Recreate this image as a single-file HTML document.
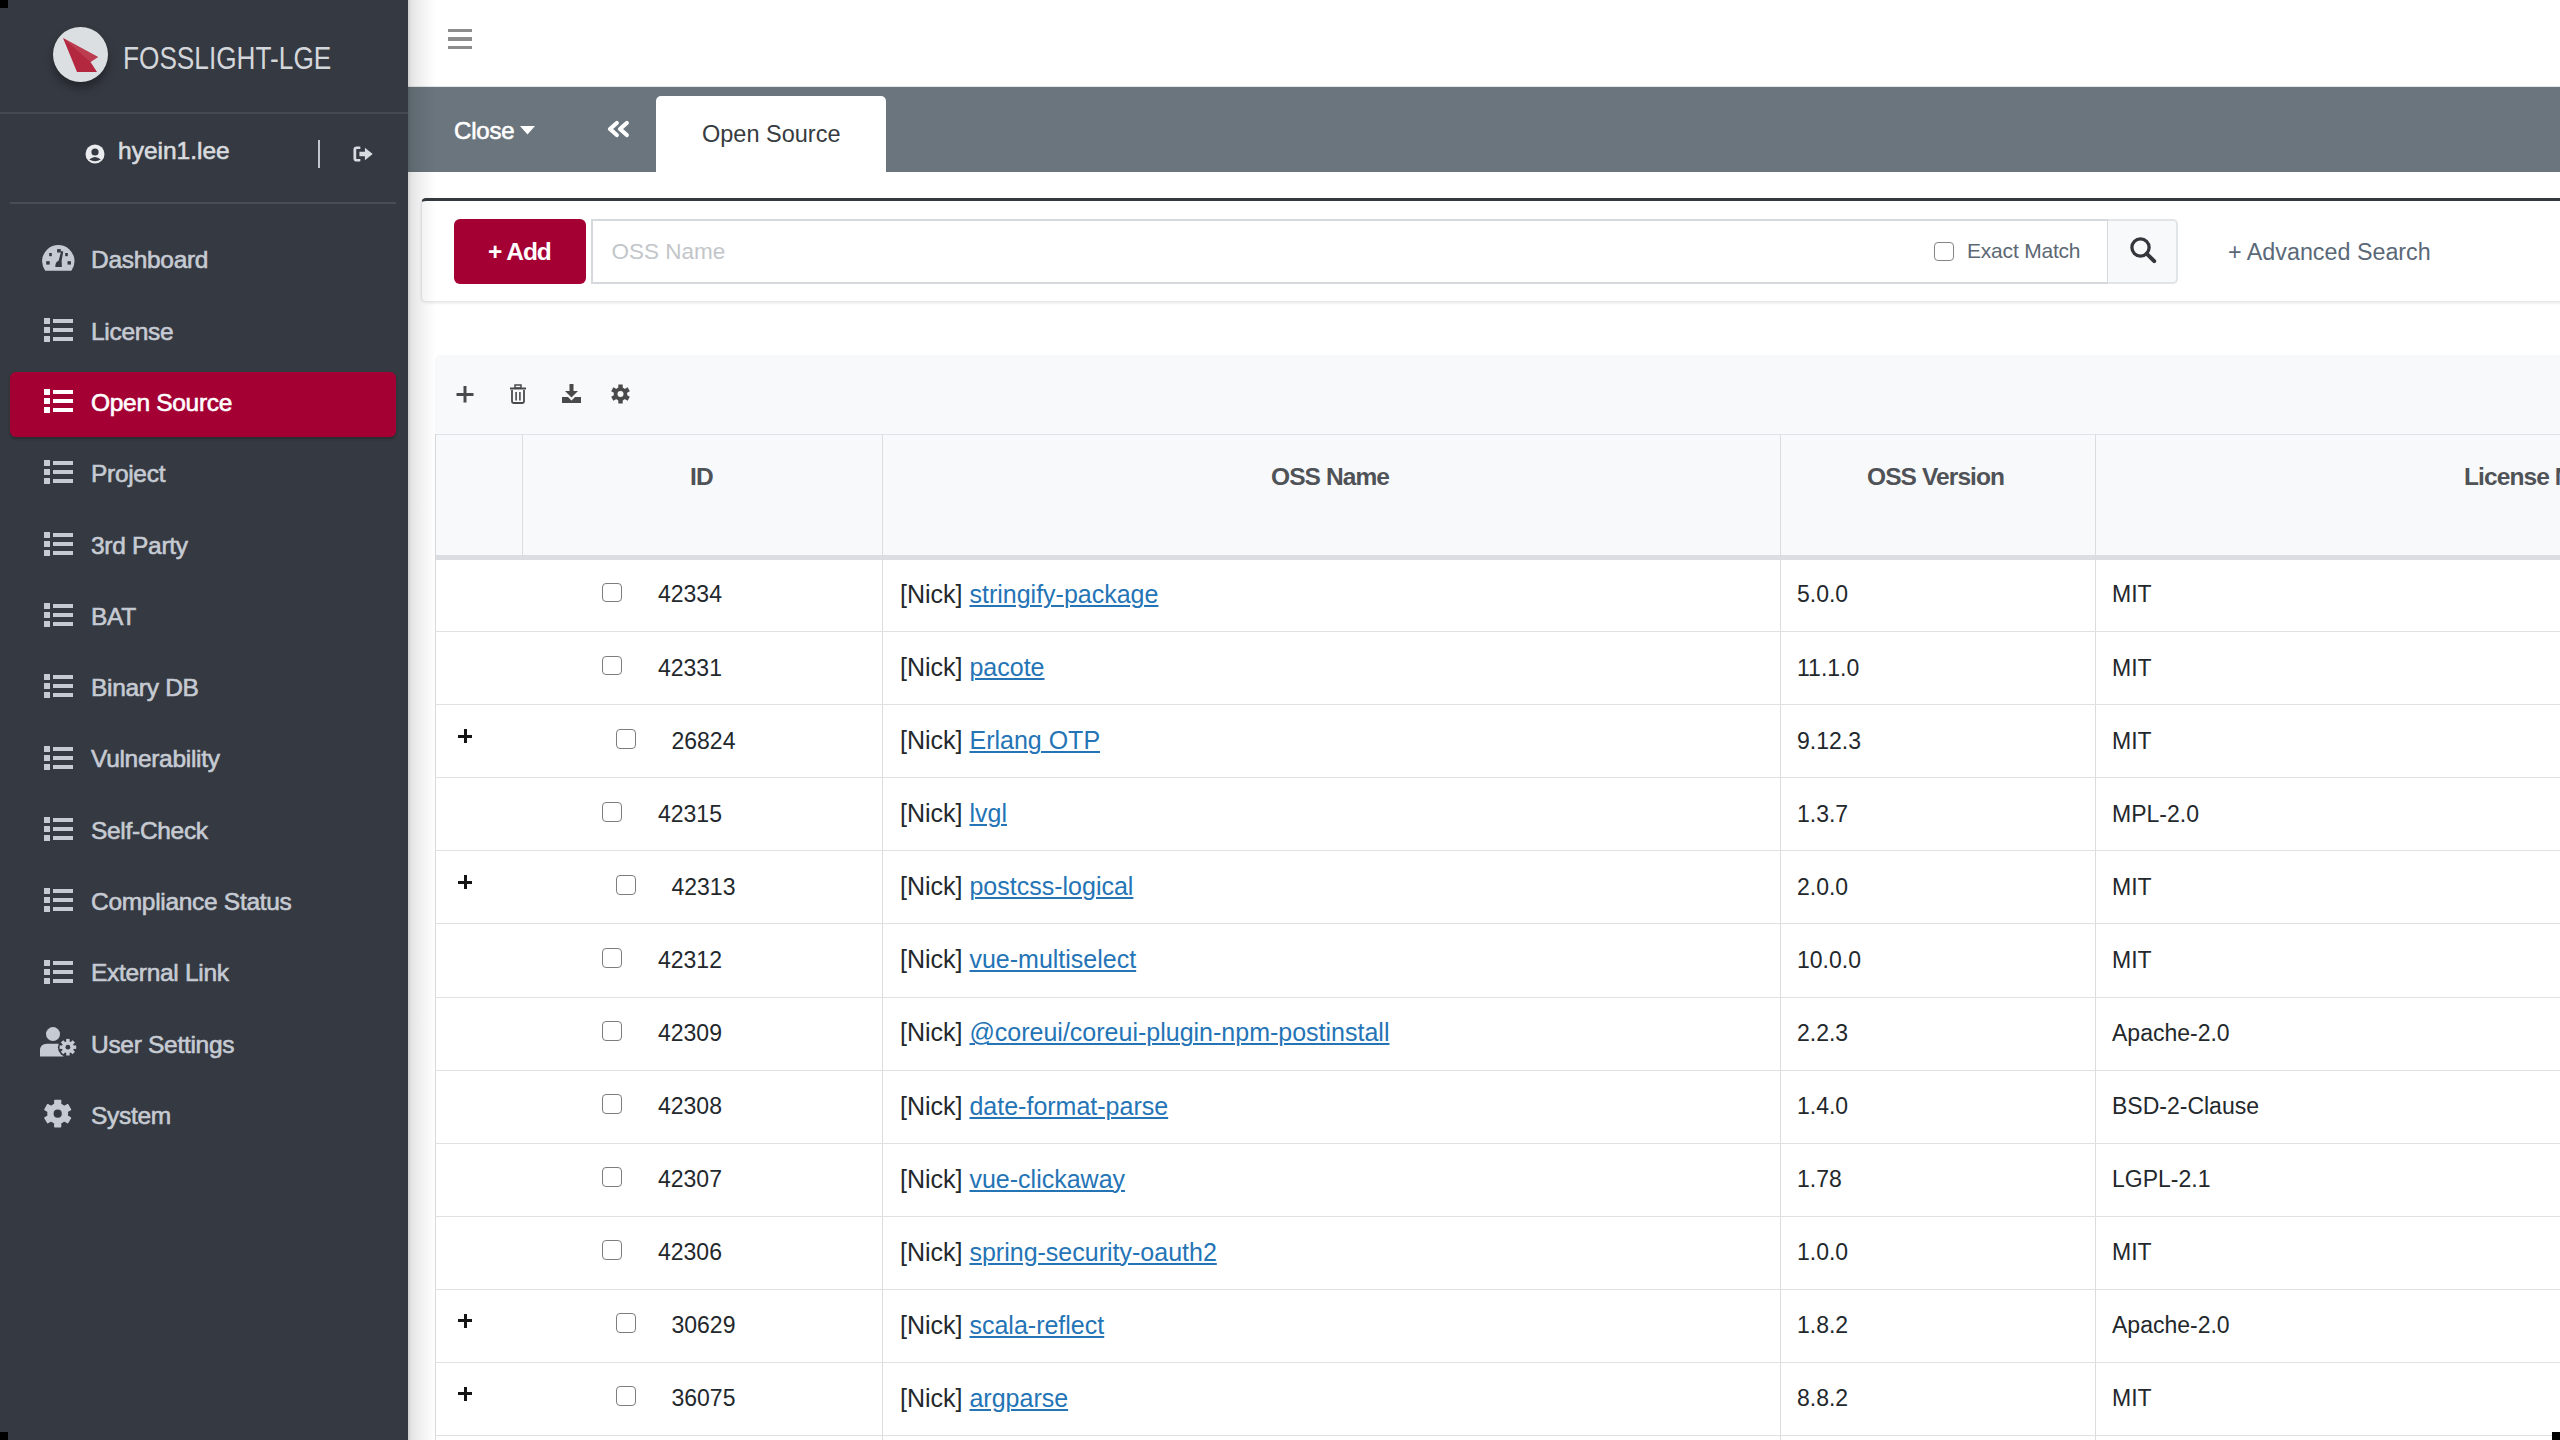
<!DOCTYPE html>
<html><head><meta charset="utf-8"><style>
*{margin:0;padding:0;box-sizing:border-box}
html,body{width:2560px;height:1440px;overflow:hidden;background:#fff;font-family:"Liberation Sans",sans-serif}
.abs{position:absolute}
.t{position:absolute;white-space:nowrap;line-height:1}
#sb{position:absolute;left:0;top:0;width:408px;height:1440px;background:#353941}
#sbshadow{position:absolute;left:408px;top:0;width:27px;height:1440px;z-index:5;background:linear-gradient(to right,rgba(0,0,0,0.19) 0,rgba(0,0,0,0.11) 12%,rgba(0,0,0,0.07) 35%,rgba(0,0,0,0.035) 65%,rgba(0,0,0,0.01) 92%,rgba(0,0,0,0) 100%)}
#brand{left:122.5px;top:41.8px;font-size:32px;color:#d3d6da;transform:scaleX(0.819);transform-origin:0 0}
#uname{left:118px;top:138.5px;font-size:24.5px;font-weight:400;-webkit-text-stroke:0.6px currentColor;color:#d8dbdf}
.mtx{left:91px;font-size:24.5px;font-weight:400;-webkit-text-stroke:0.6px currentColor;letter-spacing:-0.3px}
#active{position:absolute;left:10px;top:372px;width:386px;height:65px;background:#a50034;border-radius:6px;box-shadow:0 2px 3px rgba(0,0,0,0.25)}
#hdr{position:absolute;left:408px;top:0;width:2152px;height:87px;background:#fff;border-bottom:1px solid #e4e7ea}
#tabbar{position:absolute;left:408px;top:87px;width:2152px;height:85px;background:#6a757d}
#close{left:454px;top:119px;font-size:24px;font-weight:400;-webkit-text-stroke:0.6px currentColor;color:#fff;letter-spacing:-0.2px}
#tab{position:absolute;left:656px;top:96px;width:230px;height:76px;background:#fff;border-radius:5px 5px 0 0}
#tabtx{left:702px;top:123px;font-size:23.5px;color:#363b40}
#card{position:absolute;left:421px;top:198px;width:2160px;height:104px;background:#fff;border:1px solid #e6e8eb;border-top:3.7px solid #343a40;border-radius:5px;box-shadow:0 1px 3px rgba(0,0,0,0.10)}
#addbtn{position:absolute;left:454px;top:219px;width:132px;height:65px;background:#a50034;border-radius:6px}
#addtx{left:488px;top:239.5px;font-size:24.5px;font-weight:700;color:#fff;letter-spacing:-1px}
#inp{position:absolute;left:591px;top:219px;width:1518px;height:65px;border:2px solid #d5d9dd;background:#fff}
#ph{left:611.5px;top:241px;font-size:22.5px;color:#c2c6ca}
#exact{left:1967px;top:240px;font-size:21px;color:#5c6873;letter-spacing:-0.2px}
#sbtn{position:absolute;left:2108px;top:219px;width:70px;height:65px;border:2px solid #e2e5e8;border-left:none;background:#f8f9fa;border-radius:0 5px 5px 0}
#adv{left:2228px;top:240.5px;font-size:23.3px;color:#5a6878}
.cb{position:absolute;width:20px;height:19.5px;border:1.5px solid #7d7d7d;border-radius:4px;background:#fff}
#panel{position:absolute;left:435px;top:355px;width:2140px;height:80px;background:#f8f9fa;border-radius:5px 0 0 0}
#thead{position:absolute;left:435px;top:434px;width:2140px;height:126px;background:#f8f9fa;border-top:1px solid #dfe2e6;border-bottom:5px solid #dadde1}
.vl{position:absolute;width:1px;background:#dadcde}
.hl{position:absolute;height:1px;background:#dfe1e3;left:435px;width:2125px}
.th{top:464.8px;font-size:24.5px;font-weight:700;color:#4f5256;letter-spacing:-0.9px}
.td{font-size:23px;color:#23282c}
.nm{left:900px;font-size:25px;color:#23282c}
.nm a{color:#2474b6;text-decoration:underline;text-underline-offset:2px;text-decoration-thickness:2px}
.plus{position:absolute;left:458px;width:14px;height:14px}
.plus:before{content:"";position:absolute;left:0;top:5.5px;width:14px;height:3px;background:#151515}
.plus:after{content:"";position:absolute;left:5.5px;top:0;width:3px;height:14px;background:#151515}
.corner{position:absolute;width:8px;height:8px;background:#000}

</style></head><body>
<div id="sb"></div>
<div class="abs" style="left:53px;top:27px;width:55px;height:55px;border-radius:50%;background:#dcdfe2;box-shadow:0 6px 8px rgba(0,0,0,0.35)"></div>
<svg class="abs" style="left:0;top:0" width="120" height="100"><polygon points="63,38 98,57 90.5,62 97,72 77,72" fill="#b3283f"/><polygon points="63,38 98,57 90.5,62" fill="#c24a5c" opacity="0.6"/></svg>
<div class="t" id="brand">FOSSLIGHT-LGE</div>
<div class="abs" style="left:0;top:112px;width:408px;height:2px;background:#454a52"></div>
<svg class="abs" style="left:85px;top:144px" width="20" height="20" viewBox="0 0 20 20"><circle cx="10" cy="10" r="9.5" fill="#e9ebee"/><circle cx="10" cy="8" r="3.6" fill="#353941"/><path d="M4.2 15.5 Q10 10.5 15.8 15.5 Q10 19 4.2 15.5Z" fill="#353941"/></svg>
<div class="t" id="uname">hyein1.lee</div>
<div class="abs" style="left:318px;top:140px;width:2px;height:28px;background:#c3c7cd"></div>
<svg class="abs" style="left:352.5px;top:145.5px" width="22" height="16" viewBox="0 0 24 18" preserveAspectRatio="none"><path d="M8 2 H4 Q2 2 2 4 V14 Q2 16 4 16 H8" stroke="#d8dbdf" stroke-width="3" fill="none"/><path d="M7 6.5 H13 V2 L21.5 9 L13 16 V11.5 H7Z" fill="#d8dbdf"/></svg>
<div class="abs" style="left:10px;top:201.5px;width:386px;height:2px;background:#494e56"></div>
<div id="active"></div>
<div class="abs" style="left:36px;top:238.0px;line-height:0"><svg width="44" height="38" viewBox="0 0 44 38"><path d="M9.18 32.7 A16.2 16.2 0 1 1 35.42 32.7 Z" fill="#c6cbd3"/><rect x="10.2" y="23.2" width="3.5" height="3.4" fill="#353941"/><rect x="31.5" y="23.2" width="3.5" height="3.4" fill="#353941"/><rect x="13.2" y="15" width="2.6" height="3.2" fill="#353941"/><rect x="29.2" y="15" width="2.6" height="3.2" fill="#353941"/><rect x="21.1" y="11.1" width="3.7" height="3.4" fill="#353941"/><path d="M19.3 29 Q19.3 23.8 22.6 22.8 L25.2 13 L27.2 13.4 L25.6 23.2 Q25.9 24.5 25.8 29 Z" fill="#353941"/></svg></div>
<div class="t mtx" style="top:248.3px;color:#c6cbd3">Dashboard</div>
<div class="abs" style="left:43px;top:316.8px;line-height:0"><svg width="31" height="26" viewBox="0 0 31 26"><rect x="1" y="1" width="6" height="6" fill="#c6cbd3"/><rect x="1" y="10" width="6" height="6" fill="#c6cbd3"/><rect x="1" y="19" width="6" height="6" fill="#c6cbd3"/><rect x="10" y="2" width="20" height="4" fill="#c6cbd3"/><rect x="10" y="11" width="20" height="4" fill="#c6cbd3"/><rect x="10" y="20" width="20" height="4" fill="#c6cbd3"/></svg></div>
<div class="t mtx" style="top:319.6px;color:#c6cbd3">License</div>
<div class="abs" style="left:43px;top:388.1px;line-height:0"><svg width="31" height="26" viewBox="0 0 31 26"><rect x="1" y="1" width="6" height="6" fill="#ffffff"/><rect x="1" y="10" width="6" height="6" fill="#ffffff"/><rect x="1" y="19" width="6" height="6" fill="#ffffff"/><rect x="10" y="2" width="20" height="4" fill="#ffffff"/><rect x="10" y="11" width="20" height="4" fill="#ffffff"/><rect x="10" y="20" width="20" height="4" fill="#ffffff"/></svg></div>
<div class="t mtx" style="top:390.9px;color:#ffffff">Open Source</div>
<div class="abs" style="left:43px;top:459.4px;line-height:0"><svg width="31" height="26" viewBox="0 0 31 26"><rect x="1" y="1" width="6" height="6" fill="#c6cbd3"/><rect x="1" y="10" width="6" height="6" fill="#c6cbd3"/><rect x="1" y="19" width="6" height="6" fill="#c6cbd3"/><rect x="10" y="2" width="20" height="4" fill="#c6cbd3"/><rect x="10" y="11" width="20" height="4" fill="#c6cbd3"/><rect x="10" y="20" width="20" height="4" fill="#c6cbd3"/></svg></div>
<div class="t mtx" style="top:462.2px;color:#c6cbd3">Project</div>
<div class="abs" style="left:43px;top:530.7px;line-height:0"><svg width="31" height="26" viewBox="0 0 31 26"><rect x="1" y="1" width="6" height="6" fill="#c6cbd3"/><rect x="1" y="10" width="6" height="6" fill="#c6cbd3"/><rect x="1" y="19" width="6" height="6" fill="#c6cbd3"/><rect x="10" y="2" width="20" height="4" fill="#c6cbd3"/><rect x="10" y="11" width="20" height="4" fill="#c6cbd3"/><rect x="10" y="20" width="20" height="4" fill="#c6cbd3"/></svg></div>
<div class="t mtx" style="top:533.5px;color:#c6cbd3">3rd Party</div>
<div class="abs" style="left:43px;top:602.0px;line-height:0"><svg width="31" height="26" viewBox="0 0 31 26"><rect x="1" y="1" width="6" height="6" fill="#c6cbd3"/><rect x="1" y="10" width="6" height="6" fill="#c6cbd3"/><rect x="1" y="19" width="6" height="6" fill="#c6cbd3"/><rect x="10" y="2" width="20" height="4" fill="#c6cbd3"/><rect x="10" y="11" width="20" height="4" fill="#c6cbd3"/><rect x="10" y="20" width="20" height="4" fill="#c6cbd3"/></svg></div>
<div class="t mtx" style="top:604.8px;color:#c6cbd3">BAT</div>
<div class="abs" style="left:43px;top:673.3px;line-height:0"><svg width="31" height="26" viewBox="0 0 31 26"><rect x="1" y="1" width="6" height="6" fill="#c6cbd3"/><rect x="1" y="10" width="6" height="6" fill="#c6cbd3"/><rect x="1" y="19" width="6" height="6" fill="#c6cbd3"/><rect x="10" y="2" width="20" height="4" fill="#c6cbd3"/><rect x="10" y="11" width="20" height="4" fill="#c6cbd3"/><rect x="10" y="20" width="20" height="4" fill="#c6cbd3"/></svg></div>
<div class="t mtx" style="top:676.1px;color:#c6cbd3">Binary DB</div>
<div class="abs" style="left:43px;top:744.6px;line-height:0"><svg width="31" height="26" viewBox="0 0 31 26"><rect x="1" y="1" width="6" height="6" fill="#c6cbd3"/><rect x="1" y="10" width="6" height="6" fill="#c6cbd3"/><rect x="1" y="19" width="6" height="6" fill="#c6cbd3"/><rect x="10" y="2" width="20" height="4" fill="#c6cbd3"/><rect x="10" y="11" width="20" height="4" fill="#c6cbd3"/><rect x="10" y="20" width="20" height="4" fill="#c6cbd3"/></svg></div>
<div class="t mtx" style="top:747.4px;color:#c6cbd3">Vulnerability</div>
<div class="abs" style="left:43px;top:815.9px;line-height:0"><svg width="31" height="26" viewBox="0 0 31 26"><rect x="1" y="1" width="6" height="6" fill="#c6cbd3"/><rect x="1" y="10" width="6" height="6" fill="#c6cbd3"/><rect x="1" y="19" width="6" height="6" fill="#c6cbd3"/><rect x="10" y="2" width="20" height="4" fill="#c6cbd3"/><rect x="10" y="11" width="20" height="4" fill="#c6cbd3"/><rect x="10" y="20" width="20" height="4" fill="#c6cbd3"/></svg></div>
<div class="t mtx" style="top:818.7px;color:#c6cbd3">Self-Check</div>
<div class="abs" style="left:43px;top:887.2px;line-height:0"><svg width="31" height="26" viewBox="0 0 31 26"><rect x="1" y="1" width="6" height="6" fill="#c6cbd3"/><rect x="1" y="10" width="6" height="6" fill="#c6cbd3"/><rect x="1" y="19" width="6" height="6" fill="#c6cbd3"/><rect x="10" y="2" width="20" height="4" fill="#c6cbd3"/><rect x="10" y="11" width="20" height="4" fill="#c6cbd3"/><rect x="10" y="20" width="20" height="4" fill="#c6cbd3"/></svg></div>
<div class="t mtx" style="top:890.0px;color:#c6cbd3">Compliance Status</div>
<div class="abs" style="left:43px;top:958.5px;line-height:0"><svg width="31" height="26" viewBox="0 0 31 26"><rect x="1" y="1" width="6" height="6" fill="#c6cbd3"/><rect x="1" y="10" width="6" height="6" fill="#c6cbd3"/><rect x="1" y="19" width="6" height="6" fill="#c6cbd3"/><rect x="10" y="2" width="20" height="4" fill="#c6cbd3"/><rect x="10" y="11" width="20" height="4" fill="#c6cbd3"/><rect x="10" y="20" width="20" height="4" fill="#c6cbd3"/></svg></div>
<div class="t mtx" style="top:961.3px;color:#c6cbd3">External Link</div>
<div class="abs" style="left:35px;top:1024.3px;line-height:0"><svg width="45" height="40" viewBox="0 0 45 40"><circle cx="18" cy="10.1" r="7" fill="#c6cbd3"/><path d="M5 32.4 V26.5 Q5 19.7 12 19.7 H24 Q27 19.7 28.5 21.5 V32.4Z" fill="#c6cbd3"/><circle cx="32.9" cy="23.2" r="10" fill="#353941"/><g transform="translate(32.9 23.2)"><circle r="6" fill="#c6cbd3"/><rect x="-1.7" y="-8.3" width="3.4" height="16.6" fill="#c6cbd3" transform="rotate(0)"/><rect x="-1.7" y="-8.3" width="3.4" height="16.6" fill="#c6cbd3" transform="rotate(45)"/><rect x="-1.7" y="-8.3" width="3.4" height="16.6" fill="#c6cbd3" transform="rotate(90)"/><rect x="-1.7" y="-8.3" width="3.4" height="16.6" fill="#c6cbd3" transform="rotate(135)"/><circle r="2.4" fill="#353941"/></g></svg></div>
<div class="t mtx" style="top:1032.6px;color:#c6cbd3">User Settings</div>
<div class="abs" style="left:35px;top:1095.6px;line-height:0"><svg width="45" height="40" viewBox="0 0 45 40"><g transform="translate(22.7 17.7)"><circle r="10.5" fill="#c6cbd3"/><rect x="-3.6" y="-13.9" width="7.2" height="27.8" rx="0.8" fill="#c6cbd3" transform="rotate(0)"/><rect x="-3.6" y="-13.9" width="7.2" height="27.8" rx="0.8" fill="#c6cbd3" transform="rotate(60)"/><rect x="-3.6" y="-13.9" width="7.2" height="27.8" rx="0.8" fill="#c6cbd3" transform="rotate(120)"/><circle r="4.1" fill="#353941"/></g></svg></div>
<div class="t mtx" style="top:1103.9px;color:#c6cbd3">System</div>
<div id="hdr"></div>
<div id="sbshadow"></div>
<div class="abs" style="left:448px;top:28.5px;width:23.5px;height:3.6px;background:#8c8c8c"></div>
<div class="abs" style="left:448px;top:37px;width:23.5px;height:3.6px;background:#8c8c8c"></div>
<div class="abs" style="left:448px;top:45.7px;width:23.5px;height:3.6px;background:#8c8c8c"></div>
<div id="tabbar"></div>
<div class="t" id="close">Close</div>
<svg class="abs" style="left:520px;top:126px" width="15" height="9"><path d="M0 0 H15 L7.5 8.5Z" fill="#fff"/></svg>
<svg class="abs" style="left:604px;top:118px" width="30" height="22" viewBox="0 0 30 22"><path d="M12.8 5 L6 11 L12.8 17 M22.8 5 L16 11 L22.8 17" stroke="#fff" stroke-width="4.2" fill="none" stroke-linejoin="round" stroke-linecap="round"/></svg>
<div id="tab"></div>
<div class="t" id="tabtx">Open Source</div>
<div id="card"></div>
<div id="addbtn"></div>
<div class="t" id="addtx">+ Add</div>
<div id="inp"></div>
<div class="t" id="ph">OSS Name</div>
<div class="cb" style="left:1934px;top:242px;width:19.5px;height:18.5px;border-color:#858585"></div>
<div class="t" id="exact">Exact Match</div>
<div id="sbtn"></div>
<svg class="abs" style="left:2129px;top:236px" width="28" height="28" viewBox="0 0 28 28"><circle cx="11.5" cy="11.5" r="8.6" stroke="#33373c" stroke-width="3.3" fill="none"/><path d="M17.6 17.6 L25.2 25.2" stroke="#33373c" stroke-width="4" stroke-linecap="round"/></svg>
<div class="t" id="adv">+ Advanced Search</div>
<div id="panel"></div>
<svg class="abs" style="left:456px;top:385px" width="18" height="18"><rect x="7.5" y="1" width="3" height="16.5" fill="#4a4a4a"/><rect x="0.5" y="8" width="17" height="3" fill="#4a4a4a"/></svg>
<svg class="abs" style="left:509px;top:384px" width="18" height="20" viewBox="0 0 18 20"><rect x="1" y="3.5" width="16" height="2" fill="#4a4a4a"/><rect x="6" y="1" width="6" height="3" fill="none" stroke="#4a4a4a" stroke-width="1.5"/><path d="M3 6 V17.5 Q3 19 4.5 19 H13.5 Q15 19 15 17.5 V6" stroke="#4a4a4a" stroke-width="1.8" fill="none"/><rect x="6.3" y="8" width="1.6" height="8.5" fill="#4a4a4a"/><rect x="10.1" y="8" width="1.6" height="8.5" fill="#4a4a4a"/></svg>
<svg class="abs" style="left:561px;top:384px" width="21" height="20" viewBox="0 0 21 20"><rect x="8.5" y="0" width="4" height="8" fill="#4a4a4a"/><path d="M4 7 H17 L10.5 13.5Z" fill="#4a4a4a"/><path d="M1 13 H7 L10.5 16.5 L14 13 H20 V19 H1Z" fill="#4a4a4a"/></svg>
<svg class="abs" style="left:611px;top:384px" width="19" height="20" viewBox="0 0 19 20"><g transform="translate(9.5 10)"><circle r="6.8" fill="#4a4a4a"/><rect x="-2.2" y="-9.5" width="4.4" height="19" fill="#4a4a4a" transform="rotate(0)"/><rect x="-2.2" y="-9.5" width="4.4" height="19" fill="#4a4a4a" transform="rotate(60)"/><rect x="-2.2" y="-9.5" width="4.4" height="19" fill="#4a4a4a" transform="rotate(120)"/><circle r="3" fill="#f8f9fa"/></g></svg>
<div id="thead"></div>
<div class="vl" style="left:522px;top:435px;height:121px"></div>
<div class="vl" style="left:882px;top:435px;height:1005px"></div>
<div class="vl" style="left:1780px;top:435px;height:1005px"></div>
<div class="vl" style="left:2095px;top:435px;height:1005px"></div>
<div class="t th" style="left:690px">ID</div>
<div class="t th" style="left:1271px">OSS Name</div>
<div class="t th" style="left:1867px">OSS Version</div>
<div class="t th" style="left:2464px">License Name</div>
<div class="vl" style="left:435px;top:434px;height:1006px;background:#d6d9dc"></div>
<div class="hl" style="top:631.2px"></div>
<div class="cb" style="left:601.5px;top:582.9px"></div>
<div class="t td" style="left:658px;top:583.4px">42334</div>
<div class="t nm" style="top:582.1px">[Nick] <a>stringify-package</a></div>
<div class="t td" style="left:1797px;top:583.4px">5.0.0</div>
<div class="t td lic" style="left:2112px;top:583.4px">MIT</div>
<div class="hl" style="top:704.2px"></div>
<div class="cb" style="left:601.5px;top:655.9px"></div>
<div class="t td" style="left:658px;top:656.5px">42331</div>
<div class="t nm" style="top:655.2px">[Nick] <a>pacote</a></div>
<div class="t td" style="left:1797px;top:656.5px">11.1.0</div>
<div class="t td lic" style="left:2112px;top:656.5px">MIT</div>
<div class="hl" style="top:777.3px"></div>
<div class="plus" style="top:729.1px"></div>
<div class="cb" style="left:616px;top:729.0px"></div>
<div class="t td" style="left:671.5px;top:729.5px">26824</div>
<div class="t nm" style="top:728.2px">[Nick] <a>Erlang OTP</a></div>
<div class="t td" style="left:1797px;top:729.5px">9.12.3</div>
<div class="t td lic" style="left:2112px;top:729.5px">MIT</div>
<div class="hl" style="top:850.4px"></div>
<div class="cb" style="left:601.5px;top:802.0px"></div>
<div class="t td" style="left:658px;top:802.6px">42315</div>
<div class="t nm" style="top:801.3px">[Nick] <a>lvgl</a></div>
<div class="t td" style="left:1797px;top:802.6px">1.3.7</div>
<div class="t td lic" style="left:2112px;top:802.6px">MPL-2.0</div>
<div class="hl" style="top:923.4px"></div>
<div class="plus" style="top:875.2px"></div>
<div class="cb" style="left:616px;top:875.1px"></div>
<div class="t td" style="left:671.5px;top:875.6px">42313</div>
<div class="t nm" style="top:874.4px">[Nick] <a>postcss-logical</a></div>
<div class="t td" style="left:1797px;top:875.6px">2.0.0</div>
<div class="t td lic" style="left:2112px;top:875.6px">MIT</div>
<div class="hl" style="top:996.5px"></div>
<div class="cb" style="left:601.5px;top:948.1px"></div>
<div class="t td" style="left:658px;top:948.7px">42312</div>
<div class="t nm" style="top:947.4px">[Nick] <a>vue-multiselect</a></div>
<div class="t td" style="left:1797px;top:948.7px">10.0.0</div>
<div class="t td lic" style="left:2112px;top:948.7px">MIT</div>
<div class="hl" style="top:1069.5px"></div>
<div class="cb" style="left:601.5px;top:1021.2px"></div>
<div class="t td" style="left:658px;top:1021.7px">42309</div>
<div class="t nm" style="top:1020.4px">[Nick] <a>@coreui/coreui-plugin-npm-postinstall</a></div>
<div class="t td" style="left:1797px;top:1021.7px">2.2.3</div>
<div class="t td lic" style="left:2112px;top:1021.7px">Apache-2.0</div>
<div class="hl" style="top:1142.5px"></div>
<div class="cb" style="left:601.5px;top:1094.2px"></div>
<div class="t td" style="left:658px;top:1094.8px">42308</div>
<div class="t nm" style="top:1093.5px">[Nick] <a>date-format-parse</a></div>
<div class="t td" style="left:1797px;top:1094.8px">1.4.0</div>
<div class="t td lic" style="left:2112px;top:1094.8px">BSD-2-Clause</div>
<div class="hl" style="top:1215.6px"></div>
<div class="cb" style="left:601.5px;top:1167.3px"></div>
<div class="t td" style="left:658px;top:1167.8px">42307</div>
<div class="t nm" style="top:1166.5px">[Nick] <a>vue-clickaway</a></div>
<div class="t td" style="left:1797px;top:1167.8px">1.78</div>
<div class="t td lic" style="left:2112px;top:1167.8px">LGPL-2.1</div>
<div class="hl" style="top:1288.7px"></div>
<div class="cb" style="left:601.5px;top:1240.3px"></div>
<div class="t td" style="left:658px;top:1240.9px">42306</div>
<div class="t nm" style="top:1239.6px">[Nick] <a>spring-security-oauth2</a></div>
<div class="t td" style="left:1797px;top:1240.9px">1.0.0</div>
<div class="t td lic" style="left:2112px;top:1240.9px">MIT</div>
<div class="hl" style="top:1361.7px"></div>
<div class="plus" style="top:1313.5px"></div>
<div class="cb" style="left:616px;top:1313.4px"></div>
<div class="t td" style="left:671.5px;top:1314.0px">30629</div>
<div class="t nm" style="top:1312.7px">[Nick] <a>scala-reflect</a></div>
<div class="t td" style="left:1797px;top:1314.0px">1.8.2</div>
<div class="t td lic" style="left:2112px;top:1314.0px">Apache-2.0</div>
<div class="hl" style="top:1434.8px"></div>
<div class="plus" style="top:1386.5px"></div>
<div class="cb" style="left:616px;top:1386.4px"></div>
<div class="t td" style="left:671.5px;top:1387.0px">36075</div>
<div class="t nm" style="top:1385.7px">[Nick] <a>argparse</a></div>
<div class="t td" style="left:1797px;top:1387.0px">8.8.2</div>
<div class="t td lic" style="left:2112px;top:1387.0px">MIT</div>
<div class="corner" style="left:0;top:0"></div><div class="corner" style="left:0;top:1432px"></div><div class="corner" style="left:2552px;top:1432px"></div>
</body></html>
